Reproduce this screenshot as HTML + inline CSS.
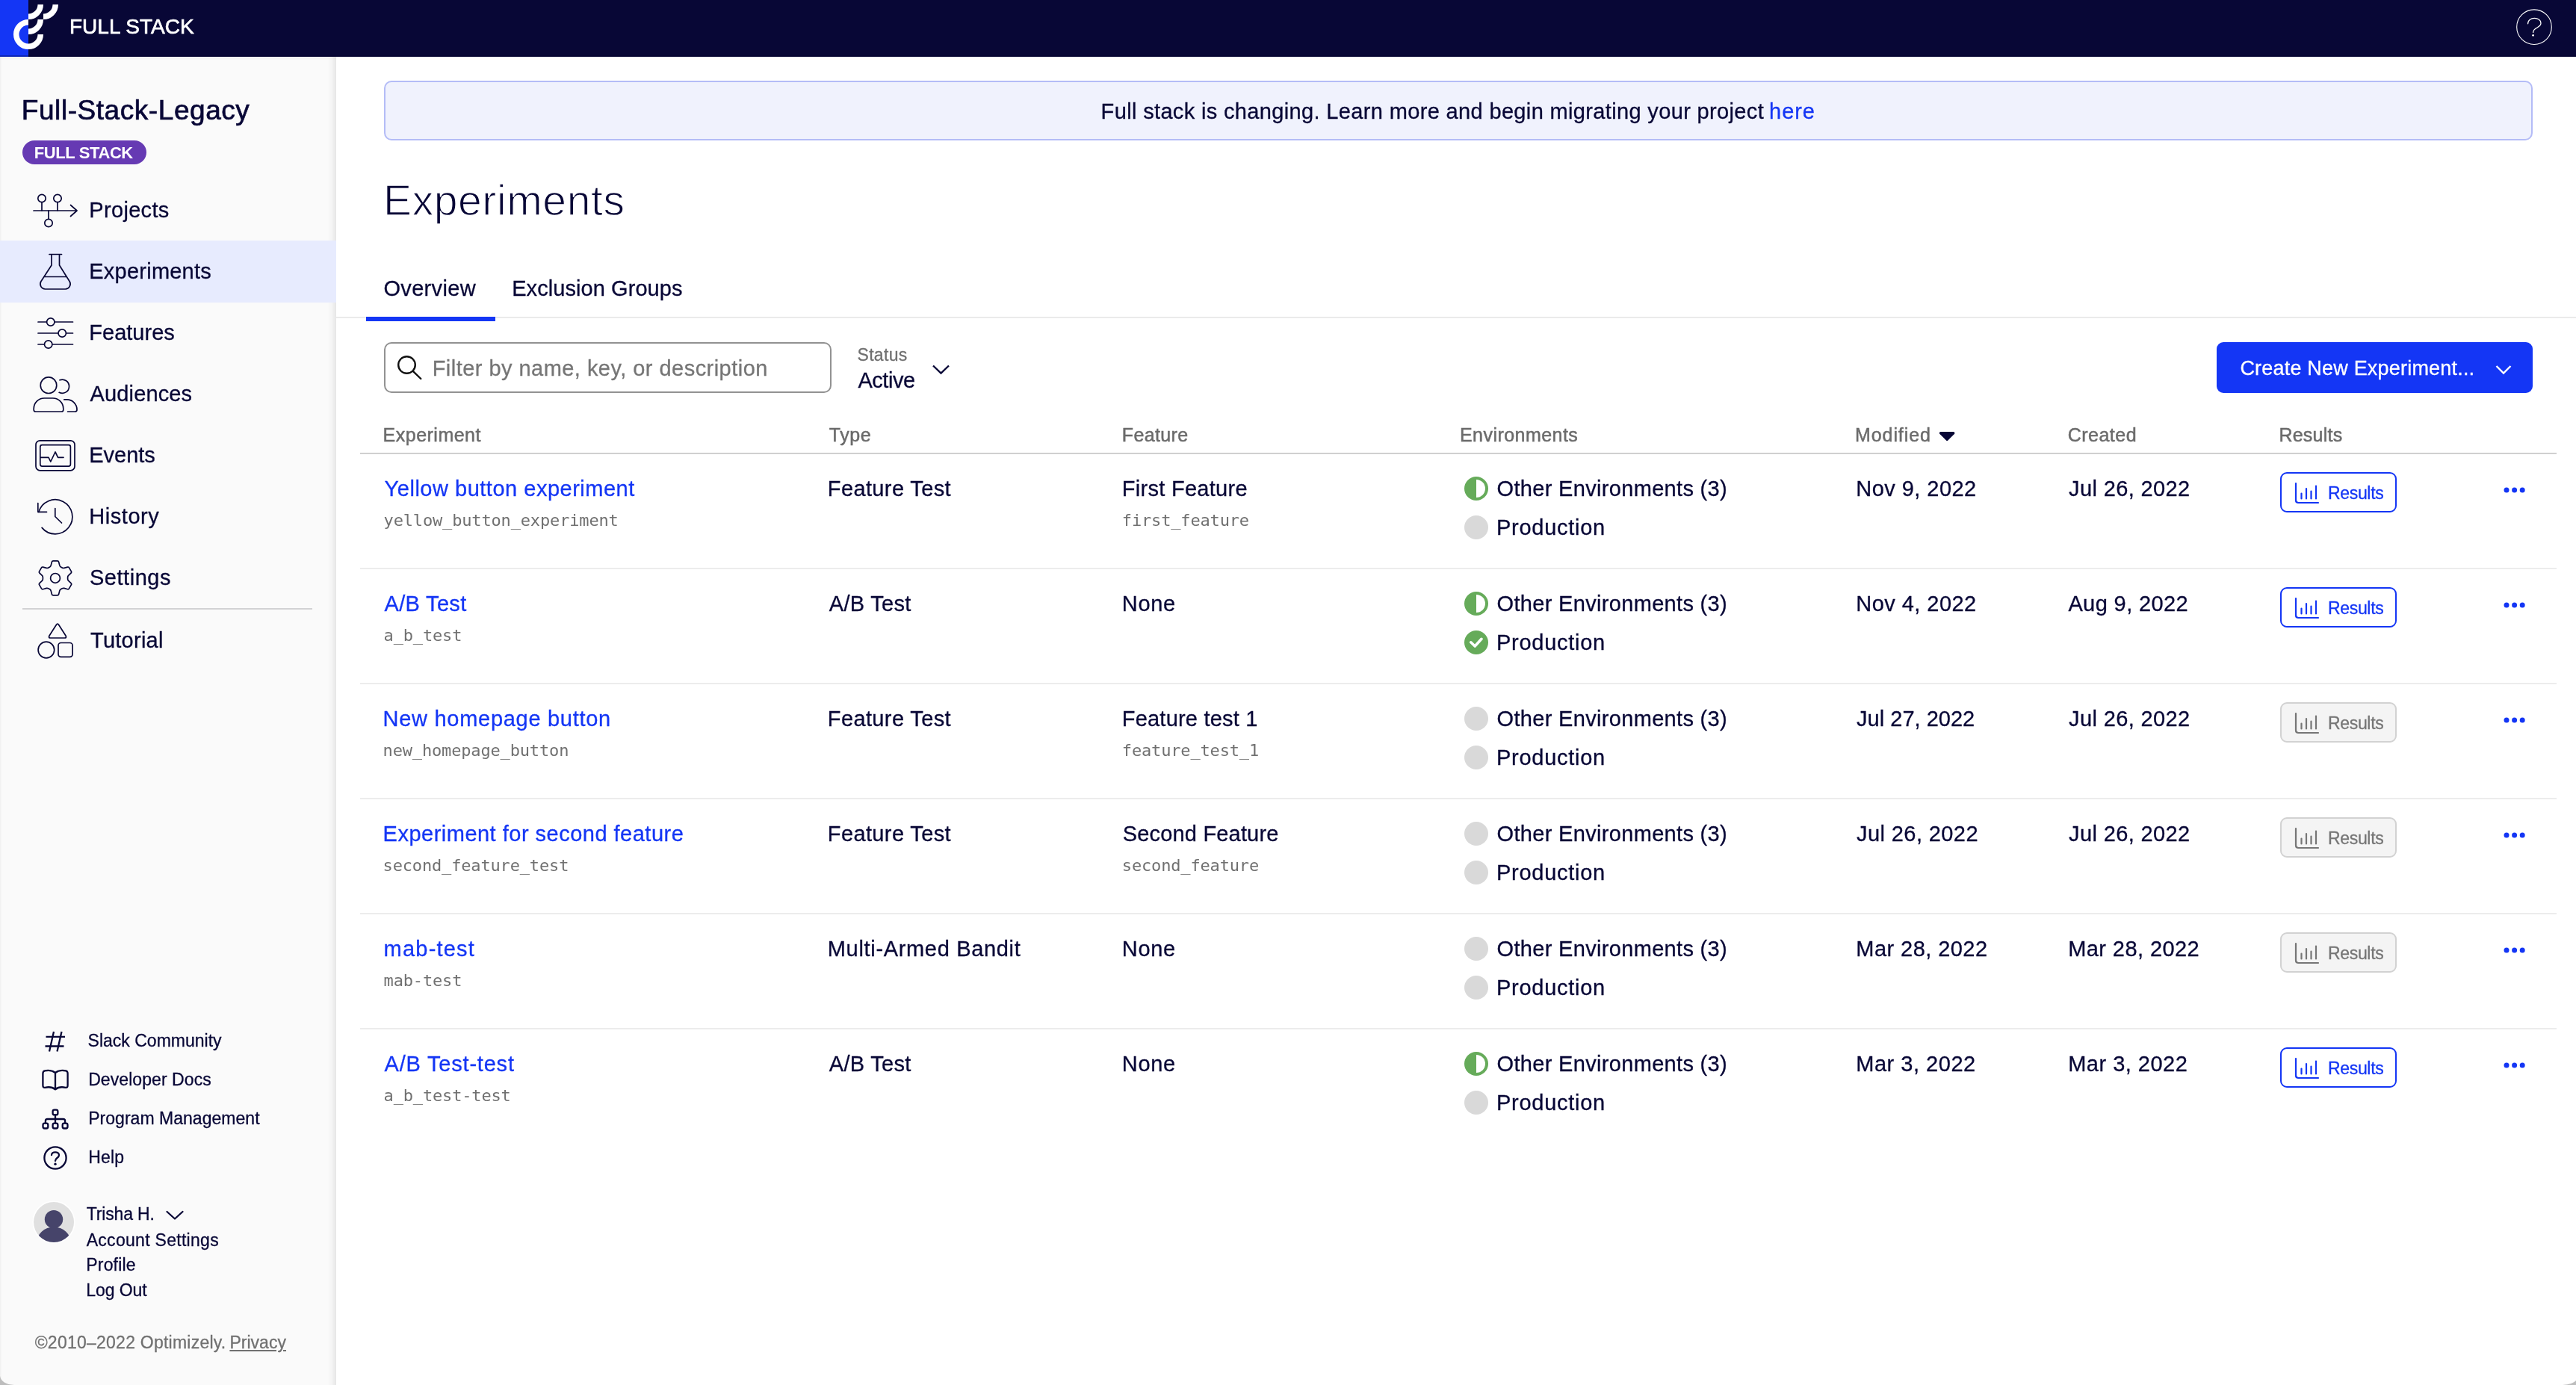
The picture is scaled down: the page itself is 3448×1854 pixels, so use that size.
<!DOCTYPE html>
<html lang="en">
<head>
<meta charset="utf-8">
<title>Experiments - Full-Stack-Legacy</title>
<style>
*{box-sizing:border-box}
html,body{margin:0;padding:0}
body{width:3448px;height:1854px;position:relative;overflow:hidden;background:#fff;font-family:"Liberation Sans",sans-serif;color:#080736}
.abs{position:absolute}
.t{-webkit-text-stroke:0.3px currentColor;position:absolute;white-space:pre;margin:0;padding:0;text-decoration:none;display:block}
.hbg{position:absolute;left:0;top:0;width:3448px;height:76px;background:#080736}
header{position:absolute;left:0;top:0;width:3448px;height:76px;will-change:transform}
aside{position:absolute;left:0;top:76px;width:450px;height:1778px;will-change:transform}
.sbg{position:absolute;left:0;top:76px;width:450px;height:1778px;background:#fafafa;box-shadow:inset 0 4px 4px -3px rgba(0,0,0,0.07),inset 3px 0 3px -2px rgba(0,0,0,0.05)}
main{position:absolute;left:450px;top:76px;width:2998px;height:1778px;will-change:transform}
svg{position:absolute;overflow:visible}
.ico{fill:none;stroke:#080736;stroke-width:1.7;stroke-linecap:round;stroke-linejoin:round}
.ico2{fill:none;stroke:#080736;stroke-width:2.3;stroke-linecap:round;stroke-linejoin:round}
.rowline{position:absolute;left:482px;width:2940px;height:2px;background:#ececec}
.btn{position:absolute;width:156px;height:54px;border:2px solid #1436f5;border-radius:9px;background:#fff}
.btn.dis{border-color:#d2d2d2;background:#f4f4f4}
.dot{position:absolute;width:32px;height:32px;border-radius:50%}
</style>
</head>
<body>

<div class="hbg"></div>
<div class="sbg"></div>
<header>
<div class="abs" style="left:0;top:0;width:38px;height:76px;background:#1436f5"></div>
<svg style="left:0;top:0" width="90" height="76" viewBox="0 0 90 76">
<g fill="none" stroke="#fff" stroke-width="7.5">
<path d="M38 29.75 A16.25 16.25 0 1 0 54.25 46"/>
<path d="M54.25 26 A16.25 16.25 0 0 1 38 42.25"/>
<path d="M54.25 6 A16.25 16.25 0 0 1 38 22.25"/>
<path d="M74.25 6 A16.25 16.25 0 0 1 58 22.25"/>
</g></svg>
<span class="t " style="left:93.0px;top:18.0px;font-size:28px;line-height:36px;color:#fff;font-weight:400;font-family:'Liberation Sans', sans-serif;letter-spacing:0.02px;-webkit-text-stroke:0.7px #fff;">FULL STACK</span>
<svg style="left:3366px;top:10px" width="52" height="52" viewBox="0 0 52 52">
<circle cx="26" cy="26.2" r="23.3" fill="none" stroke="#fff" stroke-width="1.1"/>
<path d="M17.6 21.8 C17.6 11.8 35 12.2 35 21 C35 27.5 24.6 26.5 24.6 33.5" fill="none" stroke="#fff" stroke-width="1.3" stroke-linecap="round"/>
<circle cx="24.6" cy="37.3" r="1.4" fill="#fff"/>
</svg>
<div class="abs" style="left:0;top:74px;width:3448px;height:2px;background:rgba(0,0,40,0.3)"></div>
</header>
<aside>
<div class="abs" style="left:438px;top:0;width:12px;height:1778px;background:linear-gradient(to right,rgba(0,0,0,0),rgba(0,0,0,0.025) 50%,rgba(0,0,0,0.08))"></div>
<h2 class="t " style="left:28.8px;top:48.0px;font-size:37px;line-height:48px;color:#080736;font-weight:400;font-family:'Liberation Sans', sans-serif;letter-spacing:0.56px;-webkit-text-stroke:0.7px currentColor;">Full-Stack-Legacy</h2>
<div class="abs" style="left:30px;top:112px;width:166px;height:32px;border-radius:16px;background:#663ab3"></div>
<span class="t " style="left:45.8px;top:114.0px;font-size:22px;line-height:29px;color:#fff;font-weight:700;font-family:'Liberation Sans', sans-serif;letter-spacing:-0.40px;-webkit-text-stroke:0;">FULL STACK</span>
<nav>
<div class="abs" style="left:0;top:246px;width:450px;height:83px;background:#e7ebfe"></div>
<a class="t " style="left:119.3px;top:186.3px;font-size:29px;line-height:38px;color:#080736;font-weight:400;font-family:'Liberation Sans', sans-serif;letter-spacing:0.32px;">Projects</a>
<a class="t " style="left:119.3px;top:268.3px;font-size:29px;line-height:38px;color:#080736;font-weight:400;font-family:'Liberation Sans', sans-serif;letter-spacing:0.23px;">Experiments</a>
<a class="t " style="left:119.3px;top:350.3px;font-size:29px;line-height:38px;color:#080736;font-weight:400;font-family:'Liberation Sans', sans-serif;letter-spacing:0.01px;">Features</a>
<a class="t " style="left:120.6px;top:432.3px;font-size:29px;line-height:38px;color:#080736;font-weight:400;font-family:'Liberation Sans', sans-serif;letter-spacing:0.13px;">Audiences</a>
<a class="t " style="left:119.3px;top:514.3px;font-size:29px;line-height:38px;color:#080736;font-weight:400;font-family:'Liberation Sans', sans-serif;letter-spacing:-0.03px;">Events</a>
<a class="t " style="left:119.3px;top:596.3px;font-size:29px;line-height:38px;color:#080736;font-weight:400;font-family:'Liberation Sans', sans-serif;letter-spacing:0.55px;">History</a>
<a class="t " style="left:120.0px;top:678.3px;font-size:29px;line-height:38px;color:#080736;font-weight:400;font-family:'Liberation Sans', sans-serif;letter-spacing:0.53px;">Settings</a>
<a class="t " style="left:121.0px;top:762.3px;font-size:29px;line-height:38px;color:#080736;font-weight:400;font-family:'Liberation Sans', sans-serif;letter-spacing:0.26px;">Tutorial</a>
<div class="abs" style="left:30px;top:738px;width:388px;height:2px;background:#d2d2d4"></div>
<svg style="left:0;top:-76px" width="450" height="1854" viewBox="0 0 450 1854">
<g class="ico">
<path d="M45 282 H102.5 M94.5 274.5 L103 282 L94.5 289.5"/>
<circle cx="56" cy="265.5" r="5.2"/><circle cx="77" cy="265.5" r="5.2"/><circle cx="65" cy="298.5" r="5.2"/>
<path d="M56 271 V282 M77 271 V282 M65 282 V293"/>
</g>
<g class="ico">
<path d="M66 340.5 H82.5 M69 340.5 V355 L54.7 377 A6.8 6.8 0 0 0 60.5 387 H87.5 A6.8 6.8 0 0 0 93.3 377 L79.5 355 V340.5 M59.5 370.5 H88.8"/>
</g>
<g class="ico">
<path d="M51 431 H62 M73.5 431 H97.5 M51 446 H77.5 M89 446 H97.5 M51 461 H59 M70.5 461 H97.5"/>
<circle cx="67.8" cy="431" r="5.2"/><circle cx="83.2" cy="446" r="5.2"/><circle cx="64.7" cy="461" r="5.2"/>
</g>
<g class="ico">
<circle cx="65" cy="515.7" r="10.8"/>
<path d="M45.2 548.5 V547 A14 14 0 0 1 59.2 533 H70.8 A14 14 0 0 1 84.8 547 V548.5 Q84.8 551 82.3 551 H47.7 Q45.2 551 45.2 548.5 Z"/>
<path d="M80 508.8 A9.1 9.1 0 1 1 79.2 525.3"/>
<path d="M85.8 534.9 H89.5 A13.5 13.5 0 0 1 103 548.4 Q103 551 100.3 551 H90.6"/>
</g>
<g class="ico">
<rect x="48" y="589.8" width="52" height="40" rx="5.5"/>
<rect x="53.8" y="595.7" width="40.6" height="28.4" rx="2.5"/>
<path d="M54.5 612.3 H65 L67.8 618 L74 605 L77.6 612.3 H85"/>
</g>
<g class="ico">
<path d="M51.75 685.5 A23 23 0 1 1 56.1 706.4"/>
<path d="M50.8 673.5 V685.3 H62.5"/>
<path d="M73.8 680.5 V691.5 L82.5 700"/>
</g>
<g class="ico"><path d="M66.63 758.97 Q67.84 758.27 68.19 756.91 L69.39 752.25 Q69.74 750.89 71.14 750.89 L76.86 750.89 Q78.26 750.89 78.61 752.25 L79.81 756.91 Q80.16 758.27 81.37 758.97 L83.25 760.05 Q84.46 760.75 85.81 760.38 L90.45 759.08 Q91.79 758.70 92.49 759.92 L95.36 764.88 Q96.06 766.09 95.06 767.07 L91.62 770.44 Q90.62 771.42 90.62 772.82 L90.62 774.98 Q90.62 776.38 91.62 777.36 L95.06 780.73 Q96.06 781.71 95.36 782.92 L92.49 787.88 Q91.79 789.10 90.45 788.72 L85.81 787.42 Q84.46 787.05 83.25 787.75 L81.37 788.83 Q80.16 789.53 79.81 790.89 L78.61 795.55 Q78.26 796.91 76.86 796.91 L71.14 796.91 Q69.74 796.91 69.39 795.55 L68.19 790.89 Q67.84 789.53 66.63 788.83 L64.75 787.75 Q63.54 787.05 62.19 787.42 L57.55 788.72 Q56.21 789.10 55.51 787.88 L52.64 782.92 Q51.94 781.71 52.94 780.73 L56.38 777.36 Q57.38 776.38 57.38 774.98 L57.38 772.82 Q57.38 771.42 56.38 770.44 L52.94 767.07 Q51.94 766.09 52.64 764.88 L55.51 759.92 Q56.21 758.70 57.55 759.08 L62.19 760.38 Q63.54 760.75 64.75 760.05 Z" stroke-linejoin="round"/><circle cx="74" cy="773.9" r="6.4"/></g>
<g class="ico">
<path d="M75.3 836.5 Q77 833.8 78.7 836.5 L88 851 Q89.5 854 86.5 854 H67.5 Q64.5 854 66 851 Z"/>
<circle cx="61.9" cy="870" r="10.8"/>
<rect x="78" y="860.5" width="19.1" height="18.9" rx="3.6"/>
</g>
<g class="ico2">
<path d="M61.5 1387.8 H87 M60.5 1400.5 H85.5 M72 1381 L66 1407.5 M82.5 1381 L76.5 1407.5" stroke-linecap="butt"/>
</g>
<g class="ico2">
<path d="M74 1436 V1458.3 M74 1436 C70 1432.6 63.5 1432.6 60 1433.4 Q57.4 1434 57.4 1437 V1453 Q57.4 1456.4 60.4 1455.8 C64 1455 70 1455 74 1458.3 C78 1455 84 1455 87.6 1455.8 Q90.6 1456.4 90.6 1453 V1437 Q90.6 1434 88 1433.4 C84.5 1432.6 78 1432.6 74 1436"/>
</g>
<g class="ico2">
<rect x="70.6" y="1485.6" width="6.8" height="6.8" rx="2.2"/>
<rect x="57.5" y="1503.7" width="6.8" height="6.8" rx="2.2"/>
<rect x="70.6" y="1503.7" width="6.8" height="6.8" rx="2.2"/>
<rect x="83.7" y="1503.7" width="6.8" height="6.8" rx="2.2"/>
<path d="M74 1492.5 V1503.5 M60.9 1503.5 V1500.5 Q60.9 1498 63.4 1498 H84.6 Q87.1 1498 87.1 1500.5 V1503.5"/>
</g>
<g class="ico2">
<circle cx="74" cy="1550" r="14.6"/>
<path d="M69 1546.2 C69 1541 79 1541 79 1546.2 C79 1550 74 1550 74 1554"/>
</g><circle cx="74" cy="1558.3" r="1.7" fill="#080736"/>
<path class="ico2" d="M223.5 1622 L234 1631.5 L244.5 1622" stroke-width="2" stroke-linecap="butt" stroke-linejoin="miter"/>
</svg>
<a class="t " style="left:117.6px;top:1301.7px;font-size:23px;line-height:30px;color:#080736;font-weight:400;font-family:'Liberation Sans', sans-serif;letter-spacing:-0.00px;">Slack Community</a>
<a class="t " style="left:118.2px;top:1354.0px;font-size:23px;line-height:30px;color:#080736;font-weight:400;font-family:'Liberation Sans', sans-serif;letter-spacing:0.07px;">Developer Docs</a>
<a class="t " style="left:118.2px;top:1405.9px;font-size:23px;line-height:30px;color:#080736;font-weight:400;font-family:'Liberation Sans', sans-serif;letter-spacing:0.03px;">Program Management</a>
<a class="t " style="left:118.2px;top:1458.3px;font-size:23px;line-height:30px;color:#080736;font-weight:400;font-family:'Liberation Sans', sans-serif;letter-spacing:0.16px;">Help</a>
</nav>
<svg style="left:44px;top:1532px" width="56" height="56" viewBox="0 0 56 56">
<defs><clipPath id="av"><circle cx="28" cy="28" r="27"/></clipPath></defs>
<circle cx="28" cy="28" r="28.6" fill="#fff"/>
<circle cx="28" cy="28" r="27" fill="#e0e0e0"/>
<g clip-path="url(#av)" fill="#46446a"><circle cx="28" cy="24.2" r="12.2"/><ellipse cx="28" cy="56" rx="23" ry="21.6"/></g>
</svg>
<span class="t " style="left:115.7px;top:1534.3px;font-size:23px;line-height:30px;color:#080736;font-weight:400;font-family:'Liberation Sans', sans-serif;letter-spacing:-0.16px;">Trisha H.</span>
<a class="t " style="left:115.7px;top:1568.6px;font-size:23px;line-height:30px;color:#080736;font-weight:400;font-family:'Liberation Sans', sans-serif;letter-spacing:0.29px;">Account Settings</a>
<a class="t " style="left:115.3px;top:1602.3px;font-size:23px;line-height:30px;color:#080736;font-weight:400;font-family:'Liberation Sans', sans-serif;letter-spacing:0.17px;">Profile</a>
<a class="t " style="left:115.3px;top:1636.3px;font-size:23px;line-height:30px;color:#080736;font-weight:400;font-family:'Liberation Sans', sans-serif;letter-spacing:-0.07px;">Log Out</a>
<span class="t " style="left:46.7px;top:1706.3px;font-size:23px;line-height:30px;color:#707070;font-weight:400;font-family:'Liberation Sans', sans-serif;letter-spacing:0.24px;">©2010–2022 Optimizely.</span>
<a class="t " style="left:307.4px;top:1706.3px;font-size:23px;line-height:30px;color:#707070;font-weight:400;font-family:'Liberation Sans', sans-serif;letter-spacing:0.03px;text-decoration:underline;">Privacy</a>
</aside>
<main>
<div class="abs" style="left:64px;top:32px;width:2876px;height:80px;border:2px solid #b4bcf7;border-radius:10px;background:#f0f2fd"></div>
<span class="t " style="left:1023.6px;top:53.8px;font-size:29px;line-height:38px;color:#080736;font-weight:400;font-family:'Liberation Sans', sans-serif;letter-spacing:0.35px;">Full stack is changing. Learn more and begin migrating your project</span>
<a class="t " style="left:1918.1px;top:53.8px;font-size:29px;line-height:38px;color:#1436f5;font-weight:400;font-family:'Liberation Sans', sans-serif;letter-spacing:0.93px;">here</a>
<h1 class="t " style="left:63.0px;top:155.2px;font-size:57px;line-height:74px;color:#080736;font-weight:400;font-family:'Liberation Sans', sans-serif;letter-spacing:0.61px;-webkit-text-stroke:1.3px #fff;">Experiments</h1>
<a class="t " style="left:63.4px;top:291.3px;font-size:29px;line-height:38px;color:#080736;font-weight:400;font-family:'Liberation Sans', sans-serif;letter-spacing:0.34px;">Overview</a>
<a class="t " style="left:235.2px;top:291.3px;font-size:29px;line-height:38px;color:#080736;font-weight:400;font-family:'Liberation Sans', sans-serif;letter-spacing:0.07px;">Exclusion Groups</a>
<div class="abs" style="left:0;top:348px;width:2998px;height:2px;background:#ebebeb"></div>
<div class="abs" style="left:40px;top:348px;width:173px;height:6px;background:#1436f5"></div>
<div class="abs" style="left:64px;top:382px;width:599px;height:68px;border:2px solid #929292;border-radius:10px;background:#fff"></div>
<svg style="left:80px;top:398px" width="40" height="40" viewBox="0 0 40 40"><circle cx="14.5" cy="14.5" r="11.3" fill="none" stroke="#111" stroke-width="2.4"/><path d="M22.8 22.8 L33.3 33" stroke="#111" stroke-width="2.4" stroke-linecap="round"/></svg>
<span class="t " style="left:128.7px;top:398.3px;font-size:29px;line-height:38px;color:#767676;font-weight:400;font-family:'Liberation Sans', sans-serif;letter-spacing:0.46px;">Filter by name, key, or description</span>
<span class="t " style="left:697.5px;top:384.0px;font-size:23px;line-height:30px;color:#707070;font-weight:400;font-family:'Liberation Sans', sans-serif;letter-spacing:0.32px;">Status</span>
<span class="t " style="left:698.5px;top:414.3px;font-size:29px;line-height:38px;color:#080736;font-weight:400;font-family:'Liberation Sans', sans-serif;letter-spacing:-0.49px;">Active</span>
<svg style="left:795px;top:409px" width="30" height="20" viewBox="0 0 30 20"><path d="M4 4.5 L14.5 14.5 L25 4.5" fill="none" stroke="#080736" stroke-width="2.4"/></svg>
<div class="abs" style="left:2517px;top:382px;width:423px;height:68px;border-radius:9px;background:#1436f5"></div>
<span class="t " style="left:2548.4px;top:399.8px;font-size:27px;line-height:35px;color:#fff;font-weight:400;font-family:'Liberation Sans', sans-serif;letter-spacing:0.20px;">Create New Experiment...</span>
<svg style="left:2886px;top:409px" width="30" height="20" viewBox="0 0 30 20"><path d="M5.5 5 L15 14.5 L24.5 5" fill="none" stroke="#fff" stroke-width="2.4"/></svg>
<span class="t " style="left:62.6px;top:489.8px;font-size:25px;line-height:32px;color:#6b6b6b;font-weight:400;font-family:'Liberation Sans', sans-serif;letter-spacing:0.49px;-webkit-text-stroke:0.5px currentColor;">Experiment</span>
<span class="t " style="left:659.8px;top:489.8px;font-size:25px;line-height:32px;color:#6b6b6b;font-weight:400;font-family:'Liberation Sans', sans-serif;letter-spacing:0.57px;-webkit-text-stroke:0.5px currentColor;">Type</span>
<span class="t " style="left:1051.8px;top:489.8px;font-size:25px;line-height:32px;color:#6b6b6b;font-weight:400;font-family:'Liberation Sans', sans-serif;letter-spacing:0.36px;-webkit-text-stroke:0.5px currentColor;">Feature</span>
<span class="t " style="left:1504.0px;top:489.8px;font-size:25px;line-height:32px;color:#6b6b6b;font-weight:400;font-family:'Liberation Sans', sans-serif;letter-spacing:0.45px;-webkit-text-stroke:0.5px currentColor;">Environments</span>
<span class="t " style="left:2033.0px;top:489.8px;font-size:25px;line-height:32px;color:#6b6b6b;font-weight:400;font-family:'Liberation Sans', sans-serif;letter-spacing:0.92px;-webkit-text-stroke:0.5px currentColor;">Modified</span>
<span class="t " style="left:2317.7px;top:489.8px;font-size:25px;line-height:32px;color:#6b6b6b;font-weight:400;font-family:'Liberation Sans', sans-serif;letter-spacing:0.49px;-webkit-text-stroke:0.5px currentColor;">Created</span>
<span class="t " style="left:2600.4px;top:489.8px;font-size:25px;line-height:32px;color:#6b6b6b;font-weight:400;font-family:'Liberation Sans', sans-serif;letter-spacing:0.24px;-webkit-text-stroke:0.5px currentColor;">Results</span>
<svg style="left:2146px;top:501px" width="22" height="14" viewBox="0 0 22 14"><path d="M1.6 2.7 H18.7 L10.15 11.2 Z" fill="#080736" stroke="#080736" stroke-width="3.4" stroke-linejoin="round"/></svg>
<div class="abs" style="left:32px;top:530px;width:2940px;height:2px;background:#d0d0d0"></div>
<div class="row">
<a class="t " style="left:64.6px;top:559.1px;font-size:29px;line-height:38px;color:#1436f5;font-weight:400;font-family:'Liberation Sans', sans-serif;letter-spacing:0.51px;">Yellow button experiment</a>
<span class="t " style="left:63.6px;top:606.3px;font-size:22px;line-height:29px;color:#707070;font-weight:400;font-family:'DejaVu Sans Mono', 'Liberation Mono', monospace;letter-spacing:-0.16px;-webkit-text-stroke:0;">yellow_button_experiment</span>
<span class="t " style="left:657.8px;top:559.1px;font-size:29px;line-height:38px;color:#080736;font-weight:400;font-family:'Liberation Sans', sans-serif;letter-spacing:0.38px;">Feature Test</span>
<span class="t " style="left:1051.8px;top:559.1px;font-size:29px;line-height:38px;color:#080736;font-weight:400;font-family:'Liberation Sans', sans-serif;letter-spacing:0.28px;">First Feature</span>
<span class="t " style="left:1051.8px;top:606.3px;font-size:22px;line-height:29px;color:#707070;font-weight:400;font-family:'DejaVu Sans Mono', 'Liberation Mono', monospace;letter-spacing:-0.16px;-webkit-text-stroke:0;">first_feature</span>
<svg style="left:1510px;top:562px" width="32" height="32" viewBox="0 0 32 32"><circle cx="16" cy="16" r="16" fill="#66ab5a"/><path d="M16 4 A12 12 0 0 1 16 28 Z" fill="#fff"/></svg>
<span class="t " style="left:1553.6px;top:559.1px;font-size:29px;line-height:38px;color:#080736;font-weight:400;font-family:'Liberation Sans', sans-serif;letter-spacing:0.32px;">Other Environments (3)</span>
<div class="dot" style="left:1510px;top:614px;background:#d9d9d9"></div>
<span class="t " style="left:1553.0px;top:611.1px;font-size:29px;line-height:38px;color:#080736;font-weight:400;font-family:'Liberation Sans', sans-serif;letter-spacing:0.72px;">Production</span>
<span class="t " style="left:2034.3px;top:559.1px;font-size:29px;line-height:38px;color:#080736;font-weight:400;font-family:'Liberation Sans', sans-serif;letter-spacing:0.45px;">Nov 9, 2022</span>
<span class="t " style="left:2319.1px;top:559.1px;font-size:29px;line-height:38px;color:#080736;font-weight:400;font-family:'Liberation Sans', sans-serif;letter-spacing:0.37px;">Jul 26, 2022</span>
<div class="btn" style="left:2602px;top:556px"></div>
<svg style="left:2620px;top:568px" width="36" height="32" viewBox="0 0 36 32"><g fill="none" stroke="#1436f5" stroke-width="2.2" stroke-linecap="round"><path d="M3 3 V25.5 Q3 29 6.5 29 H33"/><path d="M10.5 16.5 V23.5 M17 10 V23.5 M23.5 13.5 V23.5 M30 6.5 V23.5"/></g></svg>
<span class="t " style="left:2666.0px;top:568.5px;font-size:23px;line-height:30px;color:#1436f5;font-weight:400;font-family:'Liberation Sans', sans-serif;letter-spacing:-0.33px;">Results</span>
<svg style="left:2901px;top:576px" width="30" height="8" viewBox="0 0 30 8"><g fill="#1436f5"><circle cx="4" cy="4" r="3.5"/><circle cx="14.6" cy="4" r="3.5"/><circle cx="25.2" cy="4" r="3.5"/></g></svg>
</div>
<div class="rowline" style="left:32px;top:684px"></div>
<div class="row">
<a class="t " style="left:64.6px;top:713.1px;font-size:29px;line-height:38px;color:#1436f5;font-weight:400;font-family:'Liberation Sans', sans-serif;letter-spacing:0.31px;">A/B Test</a>
<span class="t " style="left:63.6px;top:760.3px;font-size:22px;line-height:29px;color:#707070;font-weight:400;font-family:'DejaVu Sans Mono', 'Liberation Mono', monospace;letter-spacing:-0.16px;-webkit-text-stroke:0;">a_b_test</span>
<span class="t " style="left:659.8px;top:713.1px;font-size:29px;line-height:38px;color:#080736;font-weight:400;font-family:'Liberation Sans', sans-serif;letter-spacing:0.31px;">A/B Test</span>
<span class="t " style="left:1051.8px;top:713.1px;font-size:29px;line-height:38px;color:#080736;font-weight:400;font-family:'Liberation Sans', sans-serif;letter-spacing:0.70px;">None</span>
<svg style="left:1510px;top:716px" width="32" height="32" viewBox="0 0 32 32"><circle cx="16" cy="16" r="16" fill="#66ab5a"/><path d="M16 4 A12 12 0 0 1 16 28 Z" fill="#fff"/></svg>
<span class="t " style="left:1553.6px;top:713.1px;font-size:29px;line-height:38px;color:#080736;font-weight:400;font-family:'Liberation Sans', sans-serif;letter-spacing:0.32px;">Other Environments (3)</span>
<svg style="left:1510px;top:768px" width="32" height="32" viewBox="0 0 32 32"><circle cx="16" cy="16" r="16" fill="#66ab5a"/><path d="M8.8 15.8 L14.2 21 L23 11.3" fill="none" stroke="#fff" stroke-width="3.6" stroke-linecap="round" stroke-linejoin="round"/></svg>
<span class="t " style="left:1553.0px;top:765.1px;font-size:29px;line-height:38px;color:#080736;font-weight:400;font-family:'Liberation Sans', sans-serif;letter-spacing:0.72px;">Production</span>
<span class="t " style="left:2034.3px;top:713.1px;font-size:29px;line-height:38px;color:#080736;font-weight:400;font-family:'Liberation Sans', sans-serif;letter-spacing:0.45px;">Nov 4, 2022</span>
<span class="t " style="left:2318.4px;top:713.1px;font-size:29px;line-height:38px;color:#080736;font-weight:400;font-family:'Liberation Sans', sans-serif;letter-spacing:0.39px;">Aug 9, 2022</span>
<div class="btn" style="left:2602px;top:710px"></div>
<svg style="left:2620px;top:722px" width="36" height="32" viewBox="0 0 36 32"><g fill="none" stroke="#1436f5" stroke-width="2.2" stroke-linecap="round"><path d="M3 3 V25.5 Q3 29 6.5 29 H33"/><path d="M10.5 16.5 V23.5 M17 10 V23.5 M23.5 13.5 V23.5 M30 6.5 V23.5"/></g></svg>
<span class="t " style="left:2666.0px;top:722.5px;font-size:23px;line-height:30px;color:#1436f5;font-weight:400;font-family:'Liberation Sans', sans-serif;letter-spacing:-0.33px;">Results</span>
<svg style="left:2901px;top:730px" width="30" height="8" viewBox="0 0 30 8"><g fill="#1436f5"><circle cx="4" cy="4" r="3.5"/><circle cx="14.6" cy="4" r="3.5"/><circle cx="25.2" cy="4" r="3.5"/></g></svg>
</div>
<div class="rowline" style="left:32px;top:838px"></div>
<div class="row">
<a class="t " style="left:62.6px;top:867.1px;font-size:29px;line-height:38px;color:#1436f5;font-weight:400;font-family:'Liberation Sans', sans-serif;letter-spacing:0.71px;">New homepage button</a>
<span class="t " style="left:62.6px;top:914.3px;font-size:22px;line-height:29px;color:#707070;font-weight:400;font-family:'DejaVu Sans Mono', 'Liberation Mono', monospace;letter-spacing:-0.16px;-webkit-text-stroke:0;">new_homepage_button</span>
<span class="t " style="left:657.8px;top:867.1px;font-size:29px;line-height:38px;color:#080736;font-weight:400;font-family:'Liberation Sans', sans-serif;letter-spacing:0.38px;">Feature Test</span>
<span class="t " style="left:1051.8px;top:867.1px;font-size:29px;line-height:38px;color:#080736;font-weight:400;font-family:'Liberation Sans', sans-serif;letter-spacing:0.20px;">Feature test 1</span>
<span class="t " style="left:1051.8px;top:914.3px;font-size:22px;line-height:29px;color:#707070;font-weight:400;font-family:'DejaVu Sans Mono', 'Liberation Mono', monospace;letter-spacing:-0.16px;-webkit-text-stroke:0;">feature_test_1</span>
<div class="dot" style="left:1510px;top:870px;background:#d9d9d9"></div>
<span class="t " style="left:1553.6px;top:867.1px;font-size:29px;line-height:38px;color:#080736;font-weight:400;font-family:'Liberation Sans', sans-serif;letter-spacing:0.32px;">Other Environments (3)</span>
<div class="dot" style="left:1510px;top:922px;background:#d9d9d9"></div>
<span class="t " style="left:1553.0px;top:919.1px;font-size:29px;line-height:38px;color:#080736;font-weight:400;font-family:'Liberation Sans', sans-serif;letter-spacing:0.72px;">Production</span>
<span class="t " style="left:2035.1px;top:867.1px;font-size:29px;line-height:38px;color:#080736;font-weight:400;font-family:'Liberation Sans', sans-serif;letter-spacing:0.01px;">Jul 27, 2022</span>
<span class="t " style="left:2319.1px;top:867.1px;font-size:29px;line-height:38px;color:#080736;font-weight:400;font-family:'Liberation Sans', sans-serif;letter-spacing:0.37px;">Jul 26, 2022</span>
<div class="btn dis" style="left:2602px;top:864px"></div>
<svg style="left:2620px;top:876px" width="36" height="32" viewBox="0 0 36 32"><g fill="none" stroke="#767676" stroke-width="2.2" stroke-linecap="round"><path d="M3 3 V25.5 Q3 29 6.5 29 H33"/><path d="M10.5 16.5 V23.5 M17 10 V23.5 M23.5 13.5 V23.5 M30 6.5 V23.5"/></g></svg>
<span class="t " style="left:2666.0px;top:876.5px;font-size:23px;line-height:30px;color:#767676;font-weight:400;font-family:'Liberation Sans', sans-serif;letter-spacing:-0.33px;">Results</span>
<svg style="left:2901px;top:884px" width="30" height="8" viewBox="0 0 30 8"><g fill="#1436f5"><circle cx="4" cy="4" r="3.5"/><circle cx="14.6" cy="4" r="3.5"/><circle cx="25.2" cy="4" r="3.5"/></g></svg>
</div>
<div class="rowline" style="left:32px;top:992px"></div>
<div class="row">
<a class="t " style="left:62.6px;top:1021.1px;font-size:29px;line-height:38px;color:#1436f5;font-weight:400;font-family:'Liberation Sans', sans-serif;letter-spacing:0.49px;">Experiment for second feature</a>
<span class="t " style="left:62.6px;top:1068.3px;font-size:22px;line-height:29px;color:#707070;font-weight:400;font-family:'DejaVu Sans Mono', 'Liberation Mono', monospace;letter-spacing:-0.16px;-webkit-text-stroke:0;">second_feature_test</span>
<span class="t " style="left:657.8px;top:1021.1px;font-size:29px;line-height:38px;color:#080736;font-weight:400;font-family:'Liberation Sans', sans-serif;letter-spacing:0.38px;">Feature Test</span>
<span class="t " style="left:1052.8px;top:1021.1px;font-size:29px;line-height:38px;color:#080736;font-weight:400;font-family:'Liberation Sans', sans-serif;letter-spacing:0.17px;">Second Feature</span>
<span class="t " style="left:1051.8px;top:1068.3px;font-size:22px;line-height:29px;color:#707070;font-weight:400;font-family:'DejaVu Sans Mono', 'Liberation Mono', monospace;letter-spacing:-0.16px;-webkit-text-stroke:0;">second_feature</span>
<div class="dot" style="left:1510px;top:1024px;background:#d9d9d9"></div>
<span class="t " style="left:1553.6px;top:1021.1px;font-size:29px;line-height:38px;color:#080736;font-weight:400;font-family:'Liberation Sans', sans-serif;letter-spacing:0.32px;">Other Environments (3)</span>
<div class="dot" style="left:1510px;top:1076px;background:#d9d9d9"></div>
<span class="t " style="left:1553.0px;top:1073.1px;font-size:29px;line-height:38px;color:#080736;font-weight:400;font-family:'Liberation Sans', sans-serif;letter-spacing:0.72px;">Production</span>
<span class="t " style="left:2035.1px;top:1021.1px;font-size:29px;line-height:38px;color:#080736;font-weight:400;font-family:'Liberation Sans', sans-serif;letter-spacing:0.40px;">Jul 26, 2022</span>
<span class="t " style="left:2319.1px;top:1021.1px;font-size:29px;line-height:38px;color:#080736;font-weight:400;font-family:'Liberation Sans', sans-serif;letter-spacing:0.37px;">Jul 26, 2022</span>
<div class="btn dis" style="left:2602px;top:1018px"></div>
<svg style="left:2620px;top:1030px" width="36" height="32" viewBox="0 0 36 32"><g fill="none" stroke="#767676" stroke-width="2.2" stroke-linecap="round"><path d="M3 3 V25.5 Q3 29 6.5 29 H33"/><path d="M10.5 16.5 V23.5 M17 10 V23.5 M23.5 13.5 V23.5 M30 6.5 V23.5"/></g></svg>
<span class="t " style="left:2666.0px;top:1030.5px;font-size:23px;line-height:30px;color:#767676;font-weight:400;font-family:'Liberation Sans', sans-serif;letter-spacing:-0.33px;">Results</span>
<svg style="left:2901px;top:1038px" width="30" height="8" viewBox="0 0 30 8"><g fill="#1436f5"><circle cx="4" cy="4" r="3.5"/><circle cx="14.6" cy="4" r="3.5"/><circle cx="25.2" cy="4" r="3.5"/></g></svg>
</div>
<div class="rowline" style="left:32px;top:1146px"></div>
<div class="row">
<a class="t " style="left:63.6px;top:1175.1px;font-size:29px;line-height:38px;color:#1436f5;font-weight:400;font-family:'Liberation Sans', sans-serif;letter-spacing:1.21px;">mab-test</a>
<span class="t " style="left:63.6px;top:1222.3px;font-size:22px;line-height:29px;color:#707070;font-weight:400;font-family:'DejaVu Sans Mono', 'Liberation Mono', monospace;letter-spacing:-0.16px;-webkit-text-stroke:0;">mab-test</span>
<span class="t " style="left:657.8px;top:1175.1px;font-size:29px;line-height:38px;color:#080736;font-weight:400;font-family:'Liberation Sans', sans-serif;letter-spacing:0.67px;">Multi-Armed Bandit</span>
<span class="t " style="left:1051.8px;top:1175.1px;font-size:29px;line-height:38px;color:#080736;font-weight:400;font-family:'Liberation Sans', sans-serif;letter-spacing:0.70px;">None</span>
<div class="dot" style="left:1510px;top:1178px;background:#d9d9d9"></div>
<span class="t " style="left:1553.6px;top:1175.1px;font-size:29px;line-height:38px;color:#080736;font-weight:400;font-family:'Liberation Sans', sans-serif;letter-spacing:0.32px;">Other Environments (3)</span>
<div class="dot" style="left:1510px;top:1230px;background:#d9d9d9"></div>
<span class="t " style="left:1553.0px;top:1227.1px;font-size:29px;line-height:38px;color:#080736;font-weight:400;font-family:'Liberation Sans', sans-serif;letter-spacing:0.72px;">Production</span>
<span class="t " style="left:2034.3px;top:1175.1px;font-size:29px;line-height:38px;color:#080736;font-weight:400;font-family:'Liberation Sans', sans-serif;letter-spacing:0.44px;">Mar 28, 2022</span>
<span class="t " style="left:2318.2px;top:1175.1px;font-size:29px;line-height:38px;color:#080736;font-weight:400;font-family:'Liberation Sans', sans-serif;letter-spacing:0.42px;">Mar 28, 2022</span>
<div class="btn dis" style="left:2602px;top:1172px"></div>
<svg style="left:2620px;top:1184px" width="36" height="32" viewBox="0 0 36 32"><g fill="none" stroke="#767676" stroke-width="2.2" stroke-linecap="round"><path d="M3 3 V25.5 Q3 29 6.5 29 H33"/><path d="M10.5 16.5 V23.5 M17 10 V23.5 M23.5 13.5 V23.5 M30 6.5 V23.5"/></g></svg>
<span class="t " style="left:2666.0px;top:1184.5px;font-size:23px;line-height:30px;color:#767676;font-weight:400;font-family:'Liberation Sans', sans-serif;letter-spacing:-0.33px;">Results</span>
<svg style="left:2901px;top:1192px" width="30" height="8" viewBox="0 0 30 8"><g fill="#1436f5"><circle cx="4" cy="4" r="3.5"/><circle cx="14.6" cy="4" r="3.5"/><circle cx="25.2" cy="4" r="3.5"/></g></svg>
</div>
<div class="rowline" style="left:32px;top:1300px"></div>
<div class="row">
<a class="t " style="left:64.6px;top:1329.1px;font-size:29px;line-height:38px;color:#1436f5;font-weight:400;font-family:'Liberation Sans', sans-serif;letter-spacing:0.79px;">A/B Test-test</a>
<span class="t " style="left:63.6px;top:1376.3px;font-size:22px;line-height:29px;color:#707070;font-weight:400;font-family:'DejaVu Sans Mono', 'Liberation Mono', monospace;letter-spacing:-0.16px;-webkit-text-stroke:0;">a_b_test-test</span>
<span class="t " style="left:659.8px;top:1329.1px;font-size:29px;line-height:38px;color:#080736;font-weight:400;font-family:'Liberation Sans', sans-serif;letter-spacing:0.31px;">A/B Test</span>
<span class="t " style="left:1051.8px;top:1329.1px;font-size:29px;line-height:38px;color:#080736;font-weight:400;font-family:'Liberation Sans', sans-serif;letter-spacing:0.70px;">None</span>
<svg style="left:1510px;top:1332px" width="32" height="32" viewBox="0 0 32 32"><circle cx="16" cy="16" r="16" fill="#66ab5a"/><path d="M16 4 A12 12 0 0 1 16 28 Z" fill="#fff"/></svg>
<span class="t " style="left:1553.6px;top:1329.1px;font-size:29px;line-height:38px;color:#080736;font-weight:400;font-family:'Liberation Sans', sans-serif;letter-spacing:0.32px;">Other Environments (3)</span>
<div class="dot" style="left:1510px;top:1384px;background:#d9d9d9"></div>
<span class="t " style="left:1553.0px;top:1381.1px;font-size:29px;line-height:38px;color:#080736;font-weight:400;font-family:'Liberation Sans', sans-serif;letter-spacing:0.72px;">Production</span>
<span class="t " style="left:2034.3px;top:1329.1px;font-size:29px;line-height:38px;color:#080736;font-weight:400;font-family:'Liberation Sans', sans-serif;letter-spacing:0.51px;">Mar 3, 2022</span>
<span class="t " style="left:2318.2px;top:1329.1px;font-size:29px;line-height:38px;color:#080736;font-weight:400;font-family:'Liberation Sans', sans-serif;letter-spacing:0.49px;">Mar 3, 2022</span>
<div class="btn" style="left:2602px;top:1326px"></div>
<svg style="left:2620px;top:1338px" width="36" height="32" viewBox="0 0 36 32"><g fill="none" stroke="#1436f5" stroke-width="2.2" stroke-linecap="round"><path d="M3 3 V25.5 Q3 29 6.5 29 H33"/><path d="M10.5 16.5 V23.5 M17 10 V23.5 M23.5 13.5 V23.5 M30 6.5 V23.5"/></g></svg>
<span class="t " style="left:2666.0px;top:1338.5px;font-size:23px;line-height:30px;color:#1436f5;font-weight:400;font-family:'Liberation Sans', sans-serif;letter-spacing:-0.33px;">Results</span>
<svg style="left:2901px;top:1346px" width="30" height="8" viewBox="0 0 30 8"><g fill="#1436f5"><circle cx="4" cy="4" r="3.5"/><circle cx="14.6" cy="4" r="3.5"/><circle cx="25.2" cy="4" r="3.5"/></g></svg>
</div>
</main>
<svg style="left:0;top:1834px" width="3448" height="20" viewBox="0 0 3448 20"><path d="M0 8 Q2 19 19 20 L0 20 Z M3448 14 Q3444 19 3430 20 L3448 20 Z" fill="#bdbdbd"/></svg>
</body>
</html>
